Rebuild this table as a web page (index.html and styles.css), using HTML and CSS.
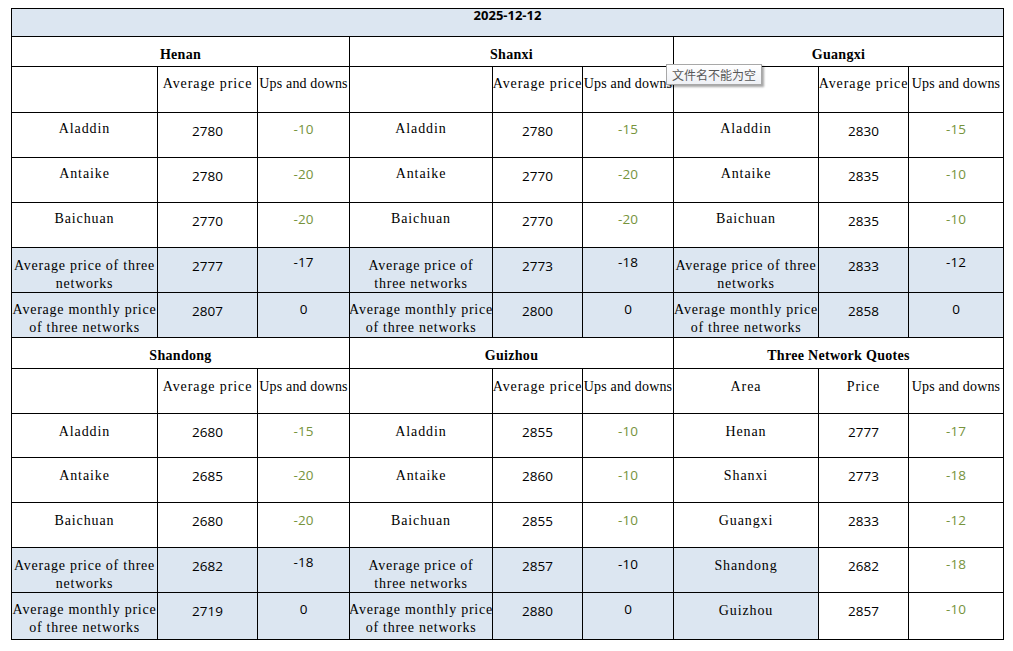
FILE: index.html
```html
<!DOCTYPE html>
<html lang="en">
<head>
<meta charset="utf-8">
<title>Three Network Quotes 2025-12-12</title>
<link rel="stylesheet" href="styles.css">
</head>
<body>
<div class="sheet">
  <div class="c date span9">2025-12-12</div>

  <div class="c head span3">Henan</div>
  <div class="c head span3">Shanxi</div>
  <div class="c head span3">Guangxi</div>

  <div class="c lbl sub"></div><div class="c lbl sub"><span>Average price</span></div><div class="c lbl sub"><span class="ud">Ups and downs</span></div>
  <div class="c lbl sub"></div><div class="c lbl sub"><span>Average price</span></div><div class="c lbl sub"><span class="ud">Ups and downs</span></div>
  <div class="c lbl sub"></div><div class="c lbl sub"><span>Average price</span></div><div class="c lbl sub"><span class="ud">Ups and downs</span></div>

  <div class="c lbl"><span>Aladdin</span></div><div class="c num">2780</div><div class="c chg up">-10</div>
  <div class="c lbl"><span>Aladdin</span></div><div class="c num">2780</div><div class="c chg up">-15</div>
  <div class="c lbl"><span>Aladdin</span></div><div class="c num">2830</div><div class="c chg up">-15</div>

  <div class="c lbl"><span>Antaike</span></div><div class="c num">2780</div><div class="c chg up">-20</div>
  <div class="c lbl"><span>Antaike</span></div><div class="c num">2770</div><div class="c chg up">-20</div>
  <div class="c lbl"><span>Antaike</span></div><div class="c num">2835</div><div class="c chg up">-10</div>

  <div class="c lbl"><span>Baichuan</span></div><div class="c num">2770</div><div class="c chg up">-20</div>
  <div class="c lbl"><span>Baichuan</span></div><div class="c num">2770</div><div class="c chg up">-20</div>
  <div class="c lbl"><span>Baichuan</span></div><div class="c num">2835</div><div class="c chg up">-10</div>

  <div class="c lbl two shade"><span>Average price of three</span><span>networks</span></div><div class="c num shade">2777</div><div class="c chg hi shade">-17</div>
  <div class="c lbl two shade"><span>Average price of</span><span>three networks</span></div><div class="c num shade">2773</div><div class="c chg hi shade">-18</div>
  <div class="c lbl two shade"><span>Average price of three</span><span>networks</span></div><div class="c num shade">2833</div><div class="c chg hi shade">-12</div>

  <div class="c lbl two mon shade"><span>Average monthly price</span><span>of three networks</span></div><div class="c num shade">2807</div><div class="c chg shade">0</div>
  <div class="c lbl two mon shade"><span>Average monthly price</span><span>of three networks</span></div><div class="c num shade">2800</div><div class="c chg shade">0</div>
  <div class="c lbl two mon shade"><span>Average monthly price</span><span>of three networks</span></div><div class="c num shade">2858</div><div class="c chg shade">0</div>

  <div class="c head span3">Shandong</div>
  <div class="c head span3">Guizhou</div>
  <div class="c head span3">Three Network Quotes</div>

  <div class="c lbl sub2"></div><div class="c lbl sub2"><span>Average price</span></div><div class="c lbl sub2"><span class="ud">Ups and downs</span></div>
  <div class="c lbl sub2"></div><div class="c lbl sub2"><span>Average price</span></div><div class="c lbl sub2"><span class="ud">Ups and downs</span></div>
  <div class="c lbl sub2"><span>Area</span></div><div class="c lbl sub2"><span>Price</span></div><div class="c lbl sub2"><span class="ud">Ups and downs</span></div>

  <div class="c lbl lo"><span>Aladdin</span></div><div class="c num lo">2680</div><div class="c chg up lo">-15</div>
  <div class="c lbl lo"><span>Aladdin</span></div><div class="c num lo">2855</div><div class="c chg up lo">-10</div>
  <div class="c lbl lo"><span>Henan</span></div><div class="c num lo">2777</div><div class="c chg up lo">-17</div>

  <div class="c lbl lo"><span>Antaike</span></div><div class="c num lo">2685</div><div class="c chg up lo">-20</div>
  <div class="c lbl lo"><span>Antaike</span></div><div class="c num lo">2860</div><div class="c chg up lo">-10</div>
  <div class="c lbl lo"><span>Shanxi</span></div><div class="c num lo">2773</div><div class="c chg up lo">-18</div>

  <div class="c lbl lo"><span>Baichuan</span></div><div class="c num lo">2680</div><div class="c chg up lo">-20</div>
  <div class="c lbl lo"><span>Baichuan</span></div><div class="c num lo">2855</div><div class="c chg up lo">-10</div>
  <div class="c lbl lo"><span>Guangxi</span></div><div class="c num lo">2833</div><div class="c chg up lo">-12</div>

  <div class="c lbl two shade"><span>Average price of three</span><span>networks</span></div><div class="c num shade">2682</div><div class="c chg hi shade">-18</div>
  <div class="c lbl two shade"><span>Average price of</span><span>three networks</span></div><div class="c num shade">2857</div><div class="c chg shade">-10</div>
  <div class="c lbl single shade"><span>Shandong</span></div><div class="c num">2682</div><div class="c chg up">-18</div>

  <div class="c lbl two mon shade"><span>Average monthly price</span><span>of three networks</span></div><div class="c num shade">2719</div><div class="c chg shade">0</div>
  <div class="c lbl two mon shade"><span>Average monthly price</span><span>of three networks</span></div><div class="c num shade">2880</div><div class="c chg shade">0</div>
  <div class="c lbl single shade"><span>Guizhou</span></div><div class="c num">2857</div><div class="c chg up">-10</div>
</div>
<div class="tip">文件名不能为空</div>
</body>
</html>
```

FILE: styles.css
```css
html, body {
  background: #ffffff;
}
body {
  margin: 0;
  padding: 8px 0 0 11px;
  position: relative;
}
.sheet {
  display: grid;
  grid-template-columns: 145px 99px 91px 142px 89px 90px 144px 89px 94px;
  grid-template-rows: 27px 29px 45px 44px 44px 44px 44px 44px 30px 44px 43px 44px 44px 44px 46px;
  gap: 1px;
  padding: 1px;
  background: #000000;
  width: max-content;
}
.c {
  background: #ffffff;
  overflow: hidden;
  display: flex;
  flex-direction: column;
  align-items: center;
  color: #000000;
  min-width: 0;
}
.c span {
  white-space: nowrap;
}
.span9 { grid-column: span 9; }
.span3 { grid-column: span 3; }
.shade { background: #dce6f1; }

.date {
  background: #dce6f1;
  overflow: visible;
  font-family: "Open Sans", "Liberation Sans", sans-serif;
  font-weight: 700;
  font-size: 13px;
  line-height: 12px;
  padding-top: 0;
}
.head {
  font-family: "Liberation Serif", "DejaVu Serif", serif;
  font-weight: 700;
  font-size: 14px;
  letter-spacing: 0.3px;
  line-height: 18px;
  padding-top: 9px;
}
.lbl {
  font-family: "Liberation Serif", "DejaVu Serif", serif;
  font-size: 14px;
  letter-spacing: 0.9px;
  line-height: 18px;
  padding-top: 7px;
}
.lbl .ud { letter-spacing: 0.15px; }
.lbl.sub { padding-top: 8px; }
.lbl.sub2 { padding-top: 9px; }
.lbl.lo { padding-top: 9px; }
.lbl.two { padding-top: 9px; letter-spacing: 0.75px; }
.lbl.two.mon { padding-top: 8px; }
.lbl.single { padding-top: 9px; }
.num, .chg {
  font-family: "Open Sans", "Liberation Sans", sans-serif;
  font-size: 13.5px;
  line-height: 18px;
  padding-top: 9px;
}
.chg { padding-top: 7px; }
.num.lo { padding-top: 9px; }
.chg.lo { padding-top: 8px; }
.chg.hi { padding-top: 5px; }
.up { color: #76933c; }

.tip {
  position: absolute;
  left: 666px;
  top: 64px;
  width: 94px;
  height: 19px;
  border: 1px solid #a8a8a8;
  background: linear-gradient(#ffffff, #eef0f5);
  box-shadow: 2px 2px 2px rgba(0, 0, 0, 0.35);
  font-family: "Noto Sans CJK SC", sans-serif;
  font-size: 12px;
  line-height: 19px;
  color: #575757;
  text-align: center;
}
```
